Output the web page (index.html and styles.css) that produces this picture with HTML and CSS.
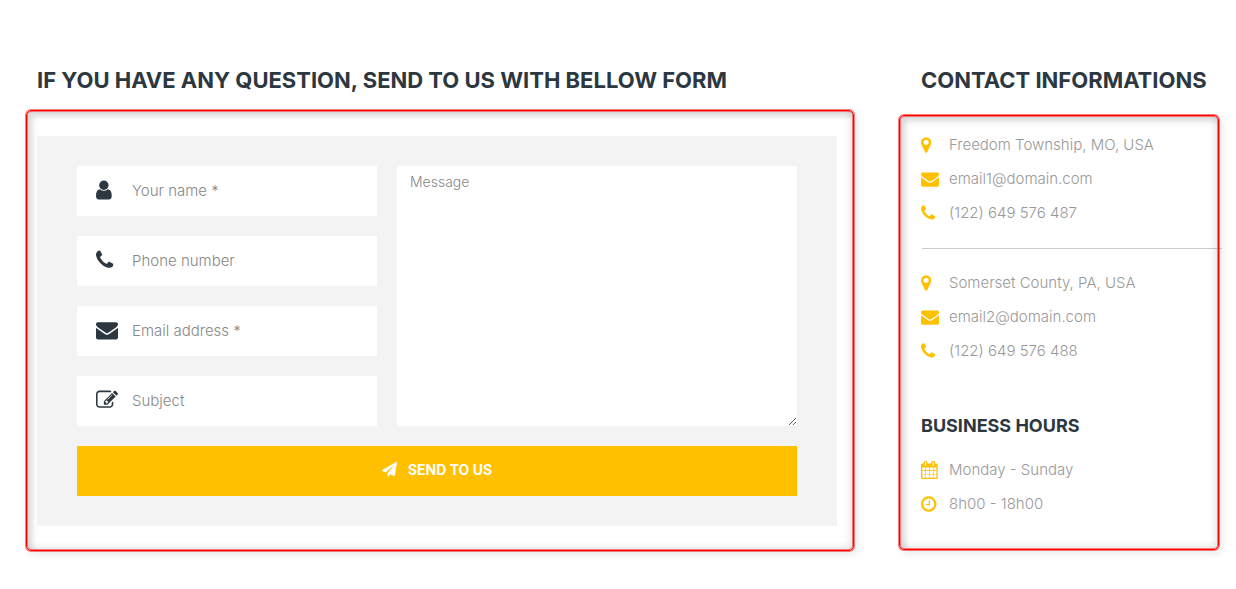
FILE: index.html
```html
<!DOCTYPE html>
<html lang="en">
<head>
<meta charset="utf-8">
<meta name="viewport" content="width=device-width, initial-scale=1">
<title>Contact</title>
<link rel="stylesheet" href="styles.css">
</head>
<body>
<svg class="sprite" aria-hidden="true">
  <symbol id="user" viewBox="0 0 1792 1792"><path d="M1280 1399q0 109-62.500 187t-150.500 78h-854q-88 0-150.500-78t-62.500-187q0-85 8.500-160.500t31.500-152 58.500-131 94-89 134.500-34.500q131 128 313 128t313-128q76 0 134.500 34.500t94 89 58.500 131 31.500 152 8.500 160.500zm-256-887q0 159-112.500 271.500t-271.500 112.500-271.500-112.500-112.500-271.500 112.500-271.500 271.500-112.500 271.500 112.500 112.500 271.500z"/></symbol>
  <symbol id="phone" viewBox="0 0 1792 1792"><path d="M1408 1240q0 27-10 70.500t-21 68.500q-21 50-122 106-94 51-186 51-27 0-52.500-3.500t-57.500-12.500-47.500-14.500-55.500-20.500-49-18q-98-35-175-83-128-79-264.500-215.500t-215.500-264.500q-48-77-83-175-3-9-18-49t-20.500-55.500-14.500-47.500-12.500-57.500-3.500-52.500q0-92 51-186 56-101 106-122 25-11 68.500-21t70.500-10q14 0 21 3 18 6 53 76 11 19 30 54t35 63.500 31 53.500q3 4 17.500 25t21.500 35.500 7 28.500q0 20-28.500 50t-62 55-62 53-28.500 46q0 9 5 22.500t8.500 20.500 14 24 11.500 19q76 137 174 235t235 174q2 1 19 11.500t24 14 20.500 8.500 22.500 5q18 0 46-28.500t53-62 55-62 50-28.500q14 0 28.500 7t35.500 21.500 25 17.500q25 15 53.500 31t63.500 35 54 30q70 35 76 53 3 7 3 21z"/></symbol>
  <symbol id="envelope" viewBox="0 0 1792 1792"><path d="M1792 710v794q0 66-47 113t-113 47h-1472q-66 0-113-47t-47-113v-794q44 49 101 87 362 246 497 345 57 42 92.500 65.500t94.500 48 110 24.500h2q51 0 110-24.500t94.500-48 92.500-65.500q170-123 498-345 57-39 100-87zm0-294q0 79-49 151t-122 123q-376 261-468 325-10 7-42.500 31t-54 38.500-52 32.500-57.500 27-50 9h-2q-23 0-50-9t-57.500-27-52-32.500-54-38.500-42.500-31q-91-64-262-182.500t-205-142.500q-62-42-117-115.500t-55-136.500q0-78 41.500-130t118.500-52h1472q65 0 112.500 47t47.500 113z"/></symbol>
  <symbol id="edit" viewBox="0 0 1792 1792"><path d="M888 1184l116-116-152-152-116 116v56h96v96h56zm440-720q-16-16-33 1l-350 350q-17 17-1 33t33-1l350-350q17-17 1-33zm80 594v190q0 119-84.500 203.500t-203.500 84.500h-832q-119 0-203.500-84.500t-84.500-203.500v-832q0-119 84.500-203.500t203.500-84.500h832q63 0 117 25 15 7 18 23 3 17-9 29l-49 49q-14 14-32 8-23-6-45-6h-832q-66 0-113 47t-47 113v832q0 66 47 113t113 47h832q66 0 113-47t47-113v-126q0-13 9-22l64-64q15-15 35-7t20 29zm-96-738l288 288-672 672h-288v-288zm444 132l-92 92-288-288 92-92q28-28 68-28t68 28l152 152q28 28 28 68t-28 68z"/></symbol>
  <symbol id="plane" viewBox="0 0 1792 1792"><path d="M1764 11q33 24 27 64l-256 1536q-5 29-32 45-14 8-31 8-11 0-24-5l-453-185-242 295q-18 23-49 23-13 0-22-4-19-7-30.500-23.500t-11.500-36.500v-349l864-1059-1069 925-395-162q-37-14-40-55-2-40 32-59l1664-960q15-9 32-9 20 0 36 11z"/></symbol>
  <symbol id="pin" viewBox="0 0 1792 1792"><path d="M768 640q0-106-75-181t-181-75-181 75-75 181 75 181 181 75 181-75 75-181zm256 0q0 109-33 179l-364 774q-16 33-47.500 52t-67.500 19-67.500-19-46.500-52l-365-774q-33-70-33-179 0-212 150-362t362-150 362 150 150 362z"/></symbol>
  <symbol id="calendar" viewBox="0 0 1792 1792"><path d="M128 1664h288v-288h-288v288zm352 0h320v-288h-320v288zm-352-352h288v-320h-288v320zm352 0h320v-320h-320v320zm-352-384h288v-288h-288v288zm736 736h320v-288h-320v288zm-384-736h320v-288h-320v288zm768 736h288v-288h-288v288zm-384-352h320v-320h-320v320zm-352-864v-288q0-13-9.500-22.500t-22.500-9.500h-64q-13 0-22.500 9.500t-9.500 22.500v288q0 13 9.500 22.500t22.500 9.500h64q13 0 22.500-9.500t9.500-22.500zm736 864h288v-320h-288v320zm-384-384h320v-288h-320v288zm384 0h288v-288h-288v288zm32-480v-288q0-13-9.500-22.500t-22.500-9.500h-64q-13 0-22.500 9.500t-9.500 22.500v288q0 13 9.500 22.500t22.500 9.500h64q13 0 22.500-9.500t9.500-22.500zm384-64v1280q0 52-38 90t-90 38h-1408q-52 0-90-38t-38-90v-1280q0-52 38-90t90-38h128v-96q0-66 47-113t113-47h64q66 0 113 47t47 113v96h384v-96q0-66 47-113t113-47h64q66 0 113 47t47 113v96h128q52 0 90 38t38 90z"/></symbol>
  <symbol id="clock" viewBox="0 0 1792 1792"><path d="M896 544v448q0 14-9 23t-23 9h-320q-14 0-23-9t-9-23v-64q0-14 9-23t23-9h224v-352q0-14 9-23t23-9h64q14 0 23 9t9 23zm416 352q0-148-73-273t-198-198-273-73-273 73-198 198-73 273 73 273 198 198 273 73 273-73 198-198 73-273zm224 0q0 209-103 385.500t-279.500 279.500-385.500 103-385.500-103-279.500-279.500-103-385.500 103-385.500 279.500-279.500 385.500-103 385.500 103 279.500 279.500 103 385.500z"/></symbol>
</svg>
<main class="page">
  <section class="question">
    <h2 class="title">IF YOU HAVE ANY QUESTION, SEND TO US WITH BELLOW FORM</h2>
    <div class="frame frame-form">
      <form class="panel">
        <div class="fields">
          <label class="field"><svg class="field-icon" aria-hidden="true"><use href="#user"/></svg><input class="input" type="text" name="name" aria-label="Your name" placeholder="Your name *"></label>
          <label class="field"><svg class="field-icon" aria-hidden="true"><use href="#phone"/></svg><input class="input" type="tel" name="phone" aria-label="Phone number" placeholder="Phone number"></label>
          <label class="field"><svg class="field-icon" aria-hidden="true"><use href="#envelope"/></svg><input class="input" type="email" name="email" aria-label="Email address" placeholder="Email address *"></label>
          <label class="field"><svg class="field-icon" aria-hidden="true"><use href="#edit"/></svg><input class="input" type="text" name="subject" aria-label="Subject" placeholder="Subject"></label>
        </div>
        <textarea class="message" name="message" aria-label="Message" placeholder="Message"></textarea>
        <button class="send" type="submit"><svg class="send-icon" aria-hidden="true"><use href="#plane"/></svg>SEND TO US</button>
      </form>
    </div>
  </section>
  <section class="contact">
    <h2 class="title">CONTACT INFORMATIONS</h2>
    <div class="frame frame-info">
      <ul class="info">
        <li class="item"><svg class="item-icon" aria-hidden="true"><use href="#pin"/></svg>Freedom Township, MO, USA</li>
        <li class="item"><svg class="item-icon" aria-hidden="true"><use href="#envelope"/></svg>email1@domain.com</li>
        <li class="item"><svg class="item-icon" aria-hidden="true"><use href="#phone"/></svg>(122) 649 576 487</li>
      </ul>
      <hr class="divider">
      <ul class="info">
        <li class="item"><svg class="item-icon" aria-hidden="true"><use href="#pin"/></svg>Somerset County, PA, USA</li>
        <li class="item"><svg class="item-icon" aria-hidden="true"><use href="#envelope"/></svg>email2@domain.com</li>
        <li class="item"><svg class="item-icon" aria-hidden="true"><use href="#phone"/></svg>(122) 649 576 488</li>
      </ul>
      <h3 class="subtitle">BUSINESS HOURS</h3>
      <ul class="info">
        <li class="item"><svg class="item-icon" aria-hidden="true"><use href="#calendar"/></svg>Monday - Sunday</li>
        <li class="item"><svg class="item-icon" aria-hidden="true"><use href="#clock"/></svg>8h00 - 18h00</li>
      </ul>
    </div>
  </section>
</main>
</body>
</html>
```
FILE: styles.css
```css
* {
  box-sizing: border-box;
}

body {
  margin: 0;
  background: #fff;
  color: #2c373f;
  font-family: Inter, "Open Sans", sans-serif;
  font-size: 15px;
}

.sprite {
  display: none;
}

.page {
  display: grid;
  grid-template-columns: minmax(0, 1fr) 320px;
  gap: 45px;
  padding: 66px 17px 20px 26px;
}

.title {
  margin: 0;
  font-size: 22px;
  font-weight: 700;
  line-height: 28px;
  white-space: nowrap;
}

.question .title {
  padding-left: 11px;
}

.contact .title {
  padding-left: 22px;
}

.frame {
  position: relative;
}

/* Outline and its soft shadow lie over the framed content. */
.frame::after {
  content: "";
  position: absolute;
  inset: 0;
  border: 1px solid #f00;
  border-radius: 5px;
  box-shadow:
    0 0 0 1px rgba(255, 0, 0, .5),
    inset 0 0 0 1px rgba(255, 90, 90, .8),
    inset 6px 6px 5px rgba(0, 0, 0, .1),
    inset -1px -1px 8px rgba(0, 0, 0, .16),
    3px 3px 9px rgba(0, 0, 0, .1);
  pointer-events: none;
}

.frame-form {
  margin-top: 16px;
  padding: 26px 17px 25px 11px;
}

.frame-info {
  margin-top: 21px;
  padding: 13px 0 29px 22px;
}

.panel {
  display: grid;
  grid-template-columns: 3fr 4fr;
  gap: 20px;
  padding: 30px 40px;
  background: #f3f3f3;
}

.fields {
  display: grid;
  gap: 20px;
}

.field {
  display: flex;
  align-items: center;
  gap: 14px;
  height: 50px;
  padding-left: 19px;
  background: #fff;
}

.field-icon {
  flex: none;
  width: 22px;
  height: 22px;
  margin-bottom: 2px;
  fill: #2c373f;
}

.input {
  flex: 1;
  min-width: 0;
  height: 50px;
  padding: 0 0 2px;
  border: 0;
  background: transparent;
  color: #2c373f;
  font: 300 15px Inter, sans-serif;
}

.message {
  display: block;
  width: 100%;
  height: 100%;
  padding: 7px 13px;
  border: 0;
  background: #fff;
  color: #2c373f;
  font: 300 14px/18px Inter, sans-serif;
  resize: vertical;
}

.input::placeholder,
.message::placeholder {
  color: #888;
  opacity: 1;
}

.send {
  grid-column: 1 / -1;
  display: flex;
  align-items: center;
  justify-content: center;
  gap: 11px;
  height: 50px;
  padding: 0 0 3px;
  border: 0;
  background: #ffc000;
  color: #fff;
  font: 700 14px Inter, sans-serif;
}

.send-icon {
  width: 15px;
  height: 15px;
  fill: #fff;
}

.info {
  margin: 0;
  padding: 0;
  list-style: none;
}

.item {
  display: flex;
  align-items: center;
  gap: 10px;
  height: 34px;
  padding-bottom: 2px;
  color: #999;
  font-weight: 300;
}

.item-icon {
  width: 18px;
  height: 18px;
  margin-top: 2px;
  fill: #ffc000;
}

.divider {
  height: 1px;
  margin: 18px -3px 17px 1px;
  border: 0;
  background: #ccc;
}

.subtitle {
  margin: 46px 0 15px;
  font-size: 18px;
  font-weight: 700;
  line-height: 24px;
}
```
